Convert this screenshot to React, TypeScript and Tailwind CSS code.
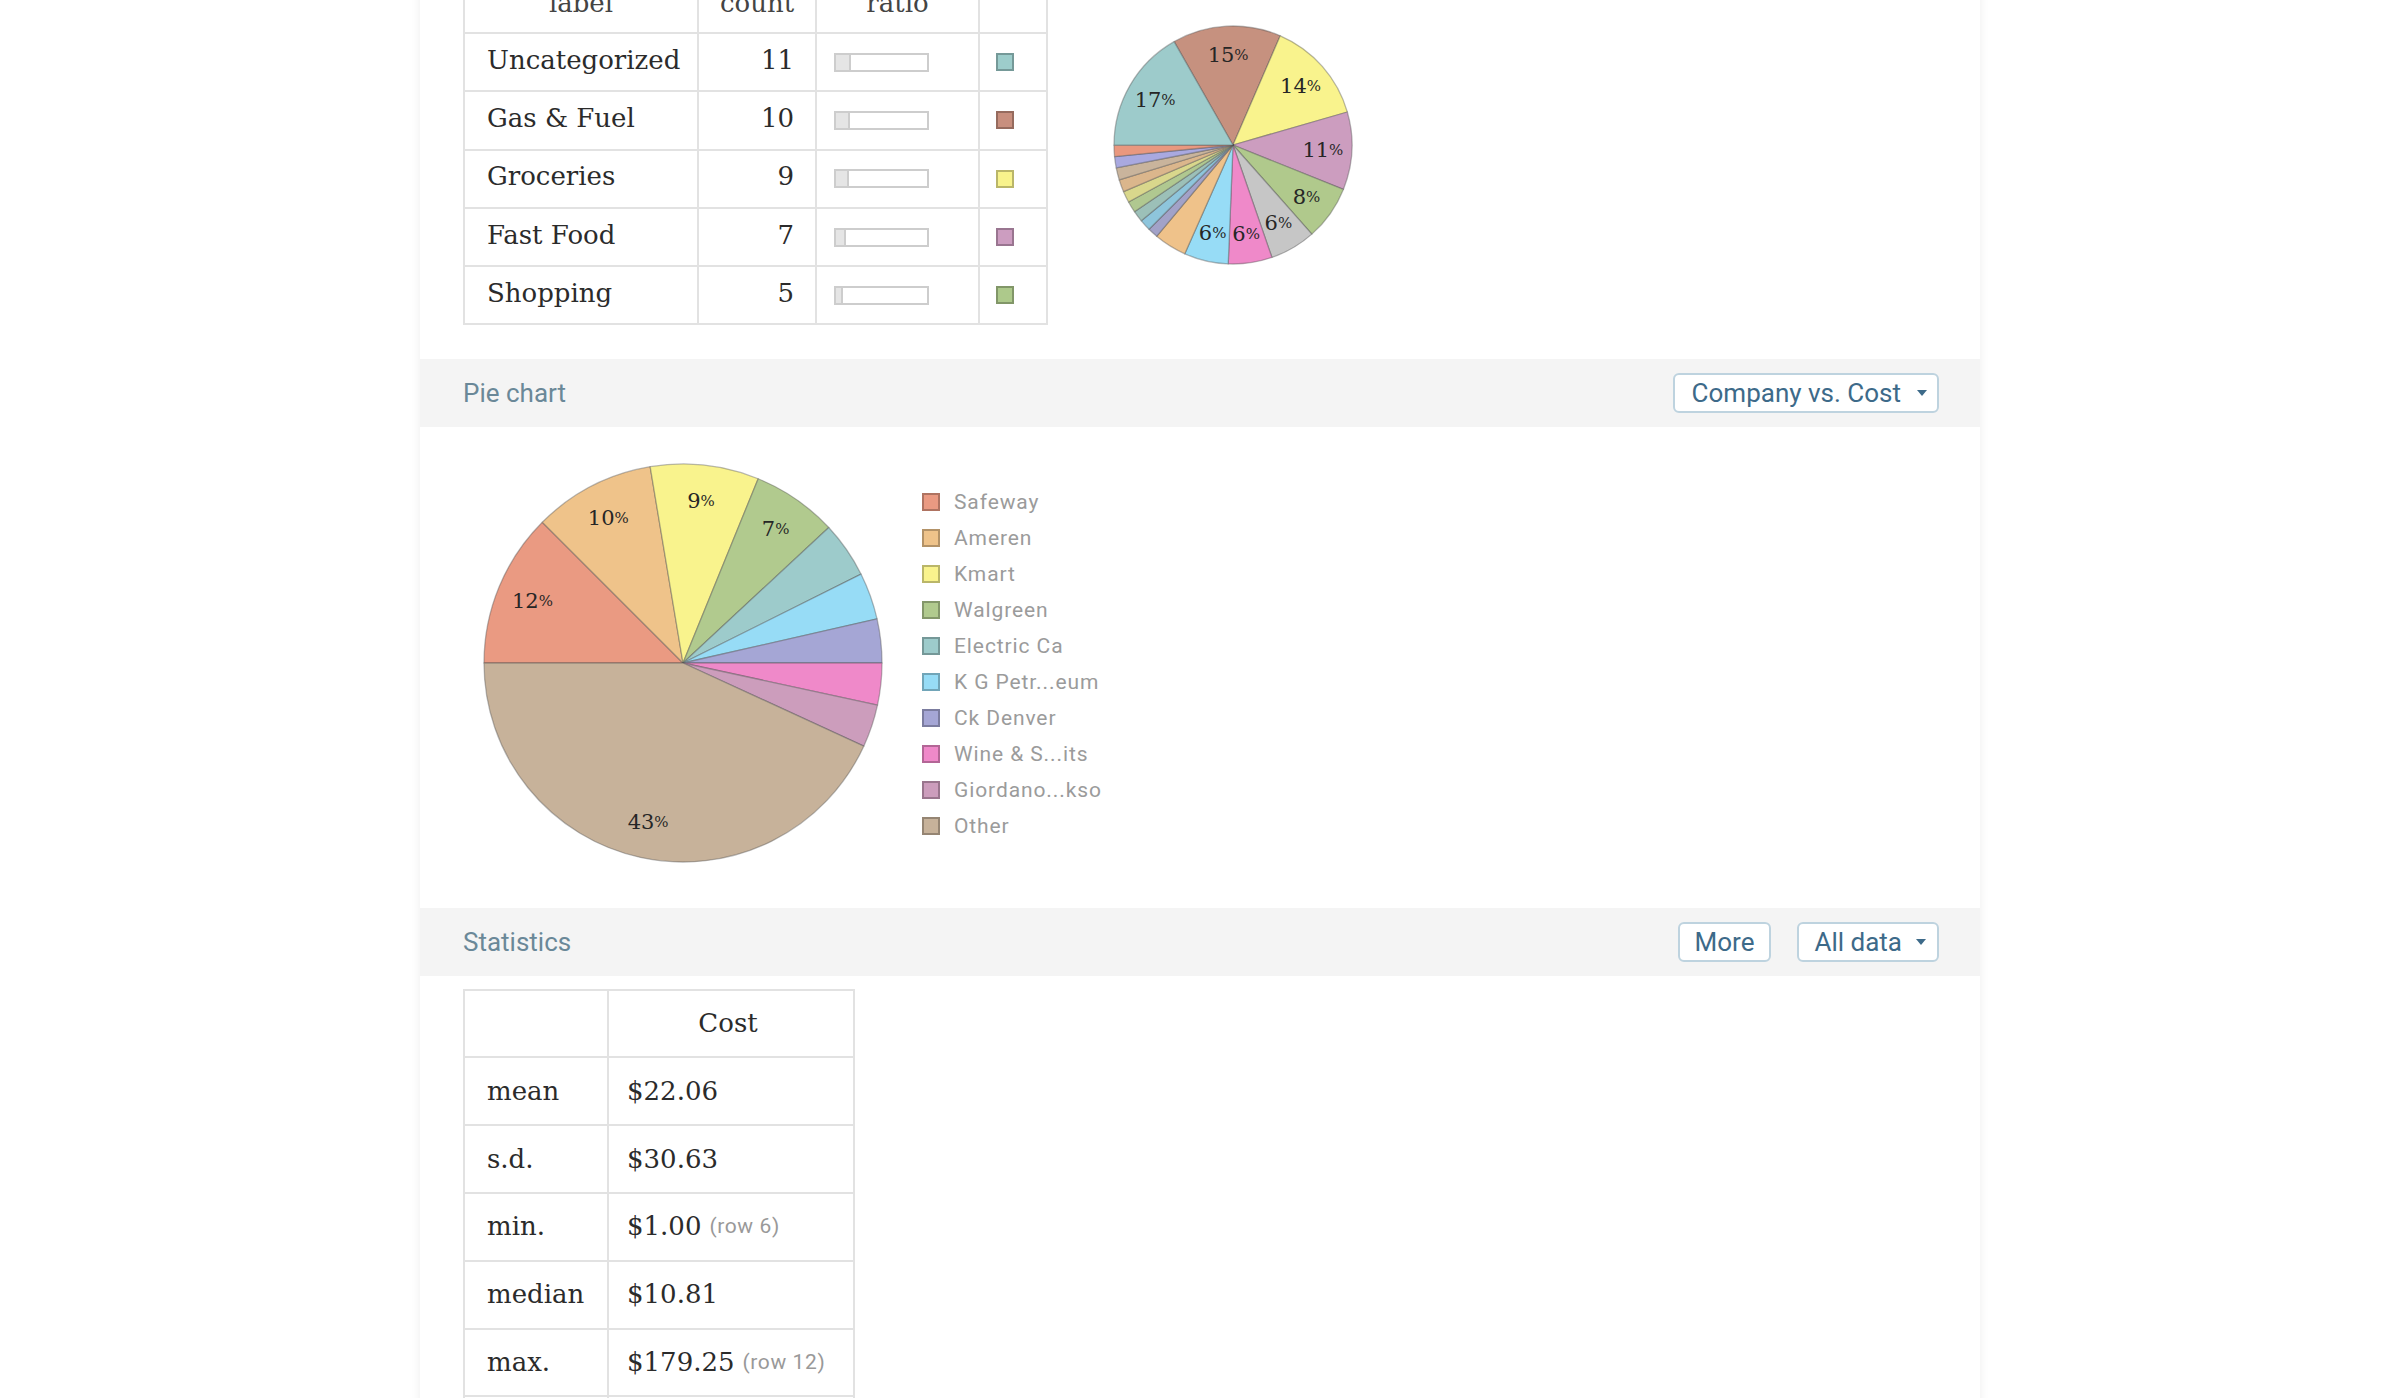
import React from "react";

interface Slice {
    deg: number;
    color: string;
    label?: string;
}

const serif = "font-['DejaVu_Serif',serif]";
const sans = "font-['Roboto',sans-serif]";

const polar = (c: number, r: number, deg: number) => {
    const a = ((deg - 90) * Math.PI) / 180;
    return [c + r * Math.cos(a), c + r * Math.sin(a)];
};

const Pie: React.FC<{
    size: number;
    r: number;
    start: number;
    slices: Slice[];
    labelR: number;
}> = ({ size, r, start, slices, labelR }) => {
    const c = size / 2;
    let a = start;
    const arcs = slices.map((s) => {
        const a0 = a;
        a += s.deg;
        return { ...s, a0, a1: a };
    });
    return (
        <svg width={size} height={size} viewBox={`0 0 ${size} ${size}`}>
            {arcs.map((s, i) => {
                const [x0, y0] = polar(c, r, s.a0);
                const [x1, y1] = polar(c, r, s.a1);
                return (
                    <path
                        key={i}
                        d={`M${c} ${c} L${x0} ${y0} A${r} ${r} 0 ${s.deg > 180 ? 1 : 0} 1 ${x1} ${y1} Z`}
                        fill={s.color}
                        stroke="rgba(80,80,80,0.4)"
                        strokeWidth={1.3}
                        strokeLinejoin="round"
                    />
                );
            })}
            {arcs.map((s, i) => {
                if (!s.label) return null;
                const [x, y] = polar(c, labelR, (s.a0 + s.a1) / 2);
                return (
                    <text
                        key={"l" + i}
                        x={x}
                        y={y}
                        textAnchor="middle"
                        dominantBaseline="central"
                        fontFamily="'DejaVu Serif', serif"
                        fontSize={21}
                        fill="#262626"
                    >
                        {s.label}
                        <tspan fontSize={15}>%</tspan>
                    </text>
                );
            })}
        </svg>
    );
};

const categoryPie: Slice[] = [
    { deg: 53, color: "#c6917f", label: "15" },
    { deg: 50.5, color: "#f9f38d", label: "14" },
    { deg: 38, color: "#cc9dbf", label: "11" },
    { deg: 26.6, color: "#b0c98c", label: "8" },
    { deg: 22.4, color: "#c6c6c6", label: "6" },
    { deg: 21.4, color: "#ef89c9", label: "6" },
    { deg: 21.6, color: "#97dcf6", label: "6" },
    { deg: 16, color: "#efc28a" },
    { deg: 5, color: "#a2a2c8" },
    { deg: 5.5, color: "#8ec5dc" },
    { deg: 5.5, color: "#9cc0b8" },
    { deg: 5.5, color: "#b0c890" },
    { deg: 5.5, color: "#d9d78c" },
    { deg: 6, color: "#dbb68c" },
    { deg: 6, color: "#c9b49c" },
    { deg: 5.5, color: "#a9a9e0" },
    { deg: 5.5, color: "#e9987f" },
    { deg: 60.4, color: "#9dcbcb", label: "17" },
];

const companies = [
    { name: "Safeway", color: "#ea9a82", deg: 45, label: "12" },
    { name: "Ameren", color: "#efc38a", deg: 35.5, label: "10" },
    { name: "Kmart", color: "#f9f38d", deg: 31.7, label: "9" },
    { name: "Walgreen", color: "#b1ca8e", deg: 24.9, label: "7" },
    { name: "Electric Ca", color: "#9dcbcb", deg: 16.4 },
    { name: "K G Petr...eum", color: "#97dcf6", deg: 13.7 },
    { name: "Ck Denver", color: "#a5a6d5", deg: 12.8 },
    { name: "Wine & S...its", color: "#ef89c9", deg: 12.2 },
    { name: "Giordano...kso", color: "#cc9dbc", deg: 12.5 },
    { name: "Other", color: "#c7b29a", deg: 155.3, label: "43" },
];

const categories = [
    { label: "Uncategorized", count: 11, color: "#9dcdcb" },
    { label: "Gas & Fuel", count: 10, color: "#c88f7e" },
    { label: "Groceries", count: 9, color: "#f8f38c" },
    { label: "Fast Food", count: 7, color: "#cc9dc0" },
    { label: "Shopping", count: 5, color: "#adc98b" },
];

const stats = [
    { label: "mean", value: "$22.06" },
    { label: "s.d.", value: "$30.63" },
    { label: "min.", value: "$1.00", note: "(row 6)" },
    { label: "median", value: "$10.81" },
    { label: "max.", value: "$179.25", note: "(row 12)" },
    { label: "sum", value: "$1,522.14" },
];

const Caret = () => (
    <svg width="10" height="6" viewBox="0 0 10 6" className="shrink-0">
        <path d="M0 0 L10 0 L5 6 Z" fill="#3d6a89" />
    </svg>
);

const btn =
    "h-[40px] flex items-center border-2 border-[#bed3df] rounded-[6px] bg-white text-[#3d6a89] text-[26px] leading-none";

const SectionBar: React.FC<{ title: string; children: React.ReactNode }> = ({
    title,
    children,
}) => (
    <div className="h-[68px] bg-[#f4f4f4] flex items-center justify-between pl-[43px] pr-[41px]">
        <span className="text-[26px] text-[#6a8898]">{title}</span>
        <div className="flex gap-[26px]">{children}</div>
    </div>
);

const cell = "border-r-2 border-b-2 border-[#e2e2e2] flex items-center";

export default function App() {
    return (
        <div className={`min-h-screen bg-white overflow-hidden ${sans}`}>
            <div className="w-[1560px] mx-auto -mt-[27px] bg-white shadow-[0_0_10px_rgba(0,0,0,0.07)]">
                {/* category table + small pie */}
                <div className="flex items-start pl-[43px] pb-[34px]">
                    <div
                        className={`grid grid-cols-[234px_118px_163px_68px] border-t-2 border-l-2 border-[#e2e2e2] text-[26px] text-[#2b2b2b] ${serif}`}
                    >
                        {["label", "count", "ratio", ""].map((h, i) => (
                            <div key={i} className={`${cell} h-[59px] justify-center text-[#444]`}>
                                {h}
                            </div>
                        ))}
                        {categories.map((c) => (
                            <React.Fragment key={c.label}>
                                <div className={`${cell} h-[58.3px] pl-[22px] pb-[4px]`}>{c.label}</div>
                                <div className={`${cell} h-[58.3px] justify-end pr-[21px] pb-[4px]`}>
                                    {c.count}
                                </div>
                                <div className={`${cell} h-[58.3px] pl-[17px]`}>
                                    <div className="w-[95px] h-[19px] border-2 border-[#cdcdcd] bg-white flex">
                                        <div
                                            className="h-full bg-[#e5e5e5] border-r-2 border-[#cdcdcd]"
                                            style={{ width: Math.round((c.count / 65) * 91) }}
                                        />
                                    </div>
                                </div>
                                <div className={`${cell} h-[58.3px] pl-[16px]`}>
                                    <div
                                        className="w-[18px] h-[18px] border-2 border-black/25"
                                        style={{ backgroundColor: c.color }}
                                    />
                                </div>
                            </React.Fragment>
                        ))}
                    </div>
                    <div className="ml-[63px] mt-[50px]">
                        <Pie size={244} r={119} start={330.4} slices={categoryPie} labelR={90} />
                    </div>
                </div>

                <SectionBar title="Pie chart">
                    <button className={`${btn} pl-[17px] pr-[10px] gap-[16px]`}>
                        Company vs. Cost
                        <Caret />
                    </button>
                </SectionBar>

                <div className="flex items-start pl-[61px] pt-[34px] pb-[43px]">
                    <Pie
                        size={404}
                        r={199}
                        start={270}
                        slices={companies.map((c) => ({ deg: c.deg, color: c.color, label: c.label }))}
                        labelR={163}
                    />
                    <div className="ml-[37px] mt-[23px] flex flex-col">
                        {companies.map((c) => (
                            <div key={c.name} className="h-[36px] flex items-center gap-[14px]">
                                <div
                                    className="w-[18px] h-[18px] border-2 border-black/25"
                                    style={{ backgroundColor: c.color }}
                                />
                                <span className="text-[21px] tracking-[0.9px] text-[#9b9b9b]">{c.name}</span>
                            </div>
                        ))}
                    </div>
                </div>

                <SectionBar title="Statistics">
                    <button className={`${btn} px-[15px]`}>More</button>
                    <button className={`${btn} pl-[15px] pr-[11px] gap-[14px]`}>
                        All data
                        <Caret />
                    </button>
                </SectionBar>

                <div className="pl-[43px] pt-[13px] pb-[40px]">
                    <div
                        className={`grid grid-cols-[144px_246px] w-fit border-t-2 border-l-2 border-[#e2e2e2] text-[26px] text-[#2b2b2b] ${serif}`}
                    >
                        <div className={`${cell} h-[67px]`} />
                        <div className={`${cell} h-[67px] justify-center pr-[6px]`}>Cost</div>
                        {stats.map((s) => (
                            <React.Fragment key={s.label}>
                                <div className={`${cell} h-[67.8px] pl-[22px]`}>{s.label}</div>
                                <div className={`${cell} h-[67.8px] pl-[18px]`}>
                                    {s.value}
                                    {s.note && (
                                        <span className={`${sans} text-[21px] text-[#999] ml-[8px] tracking-[0.6px]`}>
                                            {s.note}
                                        </span>
                                    )}
                                </div>
                            </React.Fragment>
                        ))}
                    </div>
                </div>
            </div>
        </div>
    );
}
